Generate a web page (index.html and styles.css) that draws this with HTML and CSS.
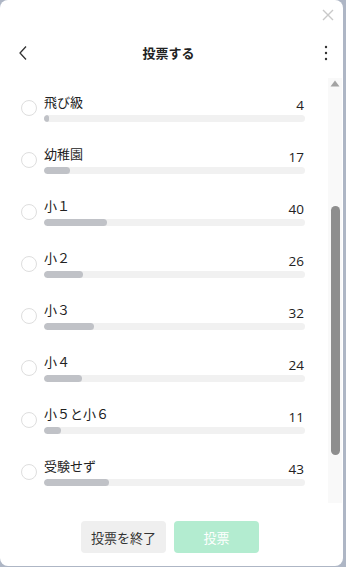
FILE: index.html
```html
<!DOCTYPE html>
<html lang="ja">
<head>
<meta charset="utf-8">
<title>投票する</title>
<link rel="stylesheet" href="styles.css">
</head>
<body>
<div class="card">
  <button class="close" aria-label="閉じる">
    <svg width="12" height="12" viewBox="0 0 12 12"><path d="M1 1L11 11M11 1L1 11" stroke="#c9c9c9" stroke-width="1.4" fill="none"/></svg>
  </button>
  <header class="header">
    <svg class="back" width="10" height="16" viewBox="0 0 10 16"><path d="M8 1.5L2 8l6 6.5" stroke="#333" stroke-width="1.3" fill="none"/></svg>
    <h1 class="title">投票する</h1>
    <svg class="more" width="4" height="16" viewBox="0 0 4 16"><circle cx="2" cy="2" r="1.2" fill="#333"/><circle cx="2" cy="8" r="1.2" fill="#333"/><circle cx="2" cy="14" r="1.2" fill="#333"/></svg>
  </header>
  <div class="body">
    <ul class="list">
      <li class="item"><span class="radio"></span><div class="content"><div class="head"><span class="label">飛び級</span><span class="count">4</span></div><div class="track"><div class="fill" style="width:2%"></div></div></div></li>
      <li class="item"><span class="radio"></span><div class="content"><div class="head"><span class="label">幼稚園</span><span class="count">17</span></div><div class="track"><div class="fill" style="width:10%"></div></div></div></li>
      <li class="item"><span class="radio"></span><div class="content"><div class="head"><span class="label">小１</span><span class="count">40</span></div><div class="track"><div class="fill" style="width:24%"></div></div></div></li>
      <li class="item"><span class="radio"></span><div class="content"><div class="head"><span class="label">小２</span><span class="count">26</span></div><div class="track"><div class="fill" style="width:15%"></div></div></div></li>
      <li class="item"><span class="radio"></span><div class="content"><div class="head"><span class="label">小３</span><span class="count">32</span></div><div class="track"><div class="fill" style="width:19%"></div></div></div></li>
      <li class="item"><span class="radio"></span><div class="content"><div class="head"><span class="label">小４</span><span class="count">24</span></div><div class="track"><div class="fill" style="width:14.5%"></div></div></div></li>
      <li class="item"><span class="radio"></span><div class="content"><div class="head"><span class="label">小５と小６</span><span class="count">11</span></div><div class="track"><div class="fill" style="width:6.5%"></div></div></div></li>
      <li class="item"><span class="radio"></span><div class="content"><div class="head"><span class="label">受験せず</span><span class="count">43</span></div><div class="track"><div class="fill" style="width:25%"></div></div></div></li>
    </ul>
    <div class="scrollbar">
      <svg class="arrow" width="10" height="7" viewBox="0 0 10 7"><path d="M5 0.5L9.5 6.5H0.5Z" fill="#a3a3a3"/></svg>
      <div class="thumb"></div>
    </div>
  </div>
  <footer class="footer">
    <button class="btn btn-end">投票を終了</button>
    <button class="btn btn-vote">投票</button>
  </footer>
</div>
</body>
</html>
```
FILE: styles.css
```css
* { box-sizing: border-box; }
html, body { margin: 0; padding: 0; }
body {
  background: #aeb6c5;
  width: 346px;
  height: 567px;
  overflow: hidden;
  font-family: "Noto Sans CJK JP", "Noto Sans", sans-serif;
  color: #222;
}
.card {
  position: relative;
  width: 343px;
  height: 566px;
  background: #fff;
  border-radius: 8px;
  display: flex;
  flex-direction: column;
  overflow: hidden;
}
.close {
  position: absolute;
  top: 9px;
  left: 322px;
  width: 12px;
  height: 12px;
  padding: 0;
  border: 0;
  background: none;
  display: flex;
}
.header {
  height: 78px;
  padding: 40px 15px 0 18px;
  display: flex;
  align-items: flex-start;
}
.header > * { flex: none; }
.back { margin-top: 5px; }
.title {
  flex: 1;
  margin: 0;
  text-align: center;
  font-size: 13px;
  line-height: 26px;
  font-weight: 700;
  color: #222;
  padding-right: 15px;
}
.more { margin-top: 5px; }
.body {
  height: 425px;
  display: flex;
  overflow: hidden;
}
.list {
  flex: 1;
  margin: 0;
  padding: 12px 23px 0 21px;
  list-style: none;
}
.item {
  height: 52px;
  display: flex;
  align-items: flex-start;
  gap: 7px;
}
.radio {
  flex: none;
  width: 16px;
  height: 16px;
  margin-top: 10px;
  border: 1px solid #dedede;
  border-radius: 50%;
}
.content { flex: 1; }
.head {
  height: 22px;
  display: flex;
  justify-content: space-between;
  align-items: flex-end;
}
.label {
  font-size: 13px;
  line-height: 20px;
  color: #222;
}
.count {
  font-family: "Open Sans", "Noto Sans", sans-serif;
  font-size: 13.5px;
  line-height: 14px;
  color: #222;
  margin-right: 1px;
}
.track {
  margin-top: 3px;
  height: 7px;
  border-radius: 4px;
  background: #f1f1f1;
  overflow: hidden;
}
.fill {
  height: 100%;
  border-radius: 4px;
  background: #c0c2c7;
  min-width: 5px;
}
.scrollbar {
  flex: none;
  width: 14px;
  margin-right: 1px;
  background: #f9f9f9;
  display: flex;
  flex-direction: column;
  align-items: center;
  padding-top: 2px;
}
.arrow { flex: none; }
.thumb {
  margin-top: 119px;
  width: 9px;
  height: 249px;
  border-radius: 4.5px;
  background: #8e8e8e;
}
.footer {
  padding-top: 18px;
  padding-right: 3px;
  display: flex;
  justify-content: center;
  gap: 8px;
}
.btn {
  width: 85px;
  height: 32px;
  border: 0;
  border-radius: 4px;
  font-family: "Noto Sans CJK JP", "Noto Sans", sans-serif;
  font-size: 13px;
  padding: 0;
}
.btn-end { background: #efefef; color: #333; }
.btn-vote { background: #b3ecd0; color: #fff; }
```
